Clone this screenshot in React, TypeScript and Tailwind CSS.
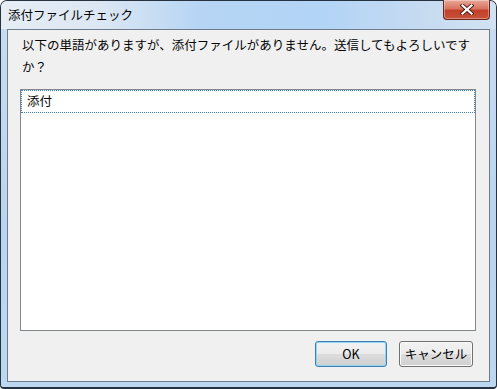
import { useState } from 'react';

const font = 'font-["Noto_Sans_CJK_JP","Noto_Sans",sans-serif]';

function CloseButton() {
  return (
    <button className="-mt-px flex h-[20px] w-[47px] items-center justify-center self-start rounded-b-[4px] border border-t-0 border-[#6a2418] bg-[linear-gradient(to_bottom,#e8a898_0%,#d97560_45%,#c2402a_55%,#c8523a_100%)] shadow-[inset_0_0_0_1px_rgba(255,255,255,0.35)]">
      <svg width="14" height="11" viewBox="0 0 14 11">
        <path d="M2.5 1.5 L11.5 9.5 M11.5 1.5 L2.5 9.5" stroke="#4b1a12" strokeWidth="4" strokeLinecap="square" />
        <path d="M2.5 1.5 L11.5 9.5 M11.5 1.5 L2.5 9.5" stroke="#ffffff" strokeWidth="2.2" strokeLinecap="square" />
      </svg>
    </button>
  );
}

function DialogButton({ label, primary }: { label: string; primary?: boolean }) {
  return (
    <button
      className={`flex h-[26px] items-center justify-center rounded-[3px] border text-[12.5px] leading-none text-black bg-[linear-gradient(to_bottom,#f2f2f2_0%,#ebebeb_50%,#dddddd_50%,#cfcfcf_100%)] ${
        primary
          ? 'w-[72px] border-[#3c7fb1] shadow-[inset_0_0_0_1px_#8fd6f6]'
          : 'w-[74px] border-[#707070] shadow-[inset_0_0_0_1px_#fbfbfb]'
      }`}
    >
      {label}
    </button>
  );
}

export default function App() {
  const [words] = useState(['添付']);

  return (
    <div className={`h-[389px] w-[497px] bg-white ${font}`}>
      <div className="flex h-full w-full flex-col rounded-t-[7px] rounded-b-[4px] border border-b-2 border-[#26323f] bg-[linear-gradient(to_bottom,#c9dcf1_0%,#bad5f0_60%,#bcd8f1_100%)] px-[6px] pb-[5px]">
        <div className="-mx-[6px] flex h-[28px] shrink-0 items-center justify-between rounded-t-[6px] bg-[linear-gradient(to_right,#e6edf5_0%,#dce7f3_20%,#b6d5f4_40%,#b2d4f6_65%,#c6dbf1_85%,#d2e2f2_100%)] px-[6px]">
          <span className="pl-[1px] text-[12.5px] leading-none text-black">添付ファイルチェック</span>
          <CloseButton />
        </div>

        <div className="flex flex-1 flex-col border border-[#6f7c8b] bg-[#f0f0f0]">
          <p className="w-[470px] pl-[14px] pt-[4px] text-[12.5px] leading-[22px] text-black">
            以下の単語がありますが、添付ファイルがありません。送信してもよろしいですか？
          </p>

          <div className="ml-[12px] mt-[11px] h-[242px] w-[456px] border border-[#828790] bg-white">
            {words.map((w) => (
              <div key={w} className="flex h-[23px] items-center border border-dotted border-[#3f86b0] pl-[5px] text-[12.5px] text-black">
                {w}
              </div>
            ))}
          </div>

          <div className="mt-[10px] flex justify-end gap-[12px] pr-[16px]">
            <DialogButton label="OK" primary />
            <DialogButton label="キャンセル" />
          </div>
        </div>
      </div>
    </div>
  );
}
